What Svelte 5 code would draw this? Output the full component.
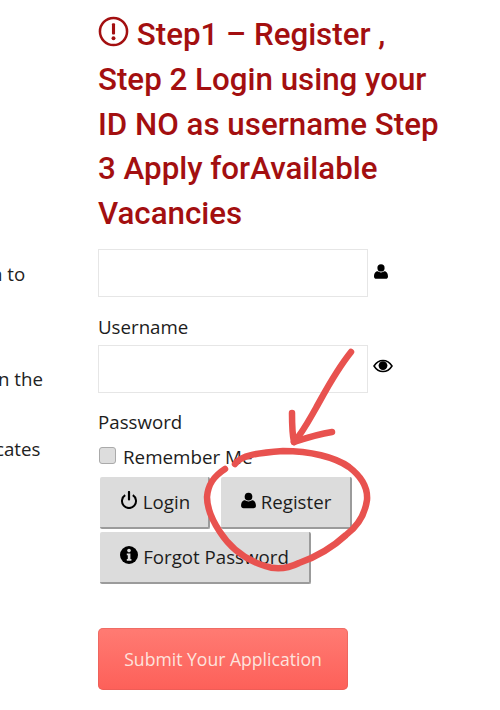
<script>
  const sideLines = [
    { text: 'n to', cls: 'l1' },
    { text: 'n the', cls: 'l2' },
    { text: 'cates', cls: 'l3' }
  ];
</script>

<div class="page">
  <aside class="side">
    {#each sideLines as line}
      <div class="side-line {line.cls}">{line.text}</div>
    {/each}
  </aside>

  <main class="main">
    <h1 class="title">
      <svg class="alert" viewBox="0 0 32 32" aria-hidden="true">
        <circle cx="16" cy="16" r="14" fill="none" stroke="currentColor" stroke-width="2.6" />
        <rect x="14.4" y="7.5" width="3.2" height="11.5" rx="1" fill="currentColor" />
        <circle cx="16" cy="23" r="2" fill="currentColor" />
      </svg>
      Step1 – Register ,<br />Step 2 Login using your<br />ID NO as username Step<br />3 Apply forAvailable<br />Vacancies
    </h1>

    <div class="field first">
      <div class="input"></div>
      <svg class="fi user" viewBox="0 0 16 16" aria-hidden="true">
        <circle cx="8" cy="4.4" r="3.6" fill="#000" />
        <path d="M1 13c0-3.6 2-5.2 3.6-5.2 1 .7 2.1 1.1 3.4 1.1s2.400-.4 3.400-1.100C13 7.800 15 9.400 15 13c0 1.500-1 2.300-2.300 2.300H3.300C2 15.300 1 14.500 1 13z" fill="#000" />
      </svg>
    </div>
    <div class="label">Username</div>

    <div class="field">
      <div class="input"></div>
      <svg class="fi eye" viewBox="0 0 20 14" aria-hidden="true">
        <path d="M1 7c2.300-3.700 5.400-5.600 9-5.600S16.700 3.300 19 7c-2.300 3.700-5.400 5.600-9 5.600S3.300 10.700 1 7z" fill="none" stroke="#000" stroke-width="1.500" />
        <circle cx="10" cy="6.600" r="4.400" fill="#000" />
      </svg>
    </div>
    <div class="label pw">Password</div>

    <div class="remember">
      <span class="check"></span>
      <span>Remember Me</span>
    </div>

    <div class="buttons">
      <button class="btn login">
        <svg class="bi" viewBox="0 0 18 18" aria-hidden="true">
          <path d="M5.200 4.200a7 7 0 1 0 7.600 0" fill="none" stroke="#000" stroke-width="2" />
          <path d="M9 1v7.500" stroke="#000" stroke-width="2.200" stroke-linecap="round" />
        </svg>
        Login
      </button>
      <button class="btn register">
        <svg class="bi" viewBox="0 0 16 16" aria-hidden="true">
          <circle cx="8" cy="4.400" r="3.600" fill="#000" />
          <path d="M1 13c0-3.600 2-5.200 3.600-5.200 1 .7 2.100 1.100 3.400 1.100s2.400-.4 3.400-1.100C13 7.800 15 9.400 15 13c0 1.500-1 2.300-2.300 2.300H3.300C2 15.300 1 14.500 1 13z" fill="#000" />
        </svg>
        Register
      </button>
      <button class="btn forgot">
        <svg class="bi info" viewBox="0 0 18 18" aria-hidden="true">
          <circle cx="9" cy="9" r="9" fill="#000" />
          <circle cx="9" cy="4.600" r="1.800" fill="#ddd" />
          <path d="M6.800 7.500h3.600v5.600h1v1.700H6.800v-1.700h1v-3.900h-1z" fill="#ddd" />
        </svg>
        Forgot Password
      </button>
    </div>

    <button class="submit">Submit Your Application</button>
  </main>

  <svg class="ink" viewBox="0 0 500 710" aria-hidden="true">
    <path d="M351 352C335 372 325 392 316 408C309 420 303 432 294 442" />
    <path d="M292 413C292 423 292 433 294 442C306 438 319 434 332 432" />
    <path d="M235 464C241 455 258 453 283 451C310 451 335 457 349 467C362 477 368 488 367 500C365 514 358 526 346 535C333 547 316 557 299 563C287 569 276 570 265 566C246 560 231 549 220 532C212 520 207 508 207 497C208 484 214 476 225 469" />
  </svg>
</div>

<style>
  :global(body) {
    margin: 0;
    background: #fff;
  }
  .page {
    position: relative;
    display: flex;
    width: 500px;
    height: 710px;
    overflow: hidden;
    font-family: "Open Sans", sans-serif;
    color: #1c1c1c;
  }
  .side {
    width: 98px;
    flex: none;
    padding-top: 262px;
    box-sizing: border-box;
    font-size: 18.700px;
    line-height: 23px;
    color: #222;
  }
  .side-line {
    white-space: nowrap;
  }
  .l1 { margin-left: -9px; }
  .l2 { margin-top: 82px; margin-left: -2px; }
  .l3 { margin-top: 47px; margin-left: -5px; }
  .main {
    flex: 1;
    min-width: 0;
  }
  .title {
    margin: 13px 0 0;
    font-family: Roboto, sans-serif;
    font-weight: 500;
    font-size: 31.300px;
    line-height: 44.800px;
    color: #a30f10;
    white-space: nowrap;
  }
  .alert {
    width: 31px;
    height: 31px;
    vertical-align: -2px;
    margin-right: 0;
  }
  .field {
    display: flex;
    align-items: center;
    height: 48px;
  }
  .first {
    margin-top: 12px;
  }
  .input {
    width: 270px;
    height: 48px;
    box-sizing: border-box;
    border: 1px solid #e6e6e6;
    background: #fff;
  }
  .fi {
    display: block;
    flex: none;
  }
  .user {
    width: 16px;
    height: 17px;
    margin: -3px 0 0 5px;
  }
  .eye {
    width: 20px;
    height: 14px;
    margin: -6px 0 0 5px;
  }
  .label {
    font-size: 18.700px;
    line-height: 24px;
    height: 48px;
    padding-top: 18px;
    box-sizing: border-box;
  }
  .pw {
    padding-top: 17px;
    height: 47px;
    margin-bottom: 0;
  }
  .remember {
    display: flex;
    align-items: center;
    gap: 7px;
    height: 28px;
    font-size: 18.800px;
    margin-top: 3px;
    padding-left: 1px;
  }
  .check {
    width: 17px;
    height: 17px;
    margin-top: -2px;
    box-sizing: border-box;
    border: 1px solid #aaa;
    border-radius: 3px;
    background: #ddd;
  }
  .buttons {
    display: flex;
    flex-wrap: wrap;
    width: 270px;
    column-gap: 11px;
    row-gap: 3px;
    margin: 6px 0 0 2px;
  }
  .btn {
    display: flex;
    align-items: center;
    justify-content: center;
    gap: 5px;
    height: 52px;
    box-sizing: border-box;
    border: 0;
    border-right: 2px solid #9b9b9b;
    border-bottom: 2px solid #9b9b9b;
    border-radius: 2px;
    background: #dcdcdc;
    font-family: "Open Sans", sans-serif;
    font-size: 18.700px;
    color: #1c1c1c;
    padding: 0;
  }
  .login { width: 110px; padding-left: 2px; }
  .login .bi { width: 18px; height: 18px; }
  .register { width: 131px; gap: 4px; }
  .forgot { width: 211px; }
  .bi {
    width: 17px;
    height: 17px;
    flex: none;
    margin-top: -3px;
  }
  .info {
    width: 18px;
    height: 18px;
  }
  .submit {
    display: block;
    width: 250px;
    height: 62px;
    margin-top: 44px;
    padding: 0;
    border: 0;
    border-radius: 5px;
    background: linear-gradient(#ff7b73, #fd6059);
    box-shadow: inset 0 0 0 1px rgba(220, 90, 85, 0.45);
    color: #fde3dd;
    font-family: "Open Sans", sans-serif;
    font-size: 17.600px;
  }
  .ink {
    position: absolute;
    inset: 0;
    width: 500px;
    height: 710px;
    pointer-events: none;
  }
  .ink path {
    fill: none;
    stroke: #e8524f;
    stroke-width: 6.500px;
    stroke-linecap: round;
    stroke-linejoin: round;
  }
</style>
